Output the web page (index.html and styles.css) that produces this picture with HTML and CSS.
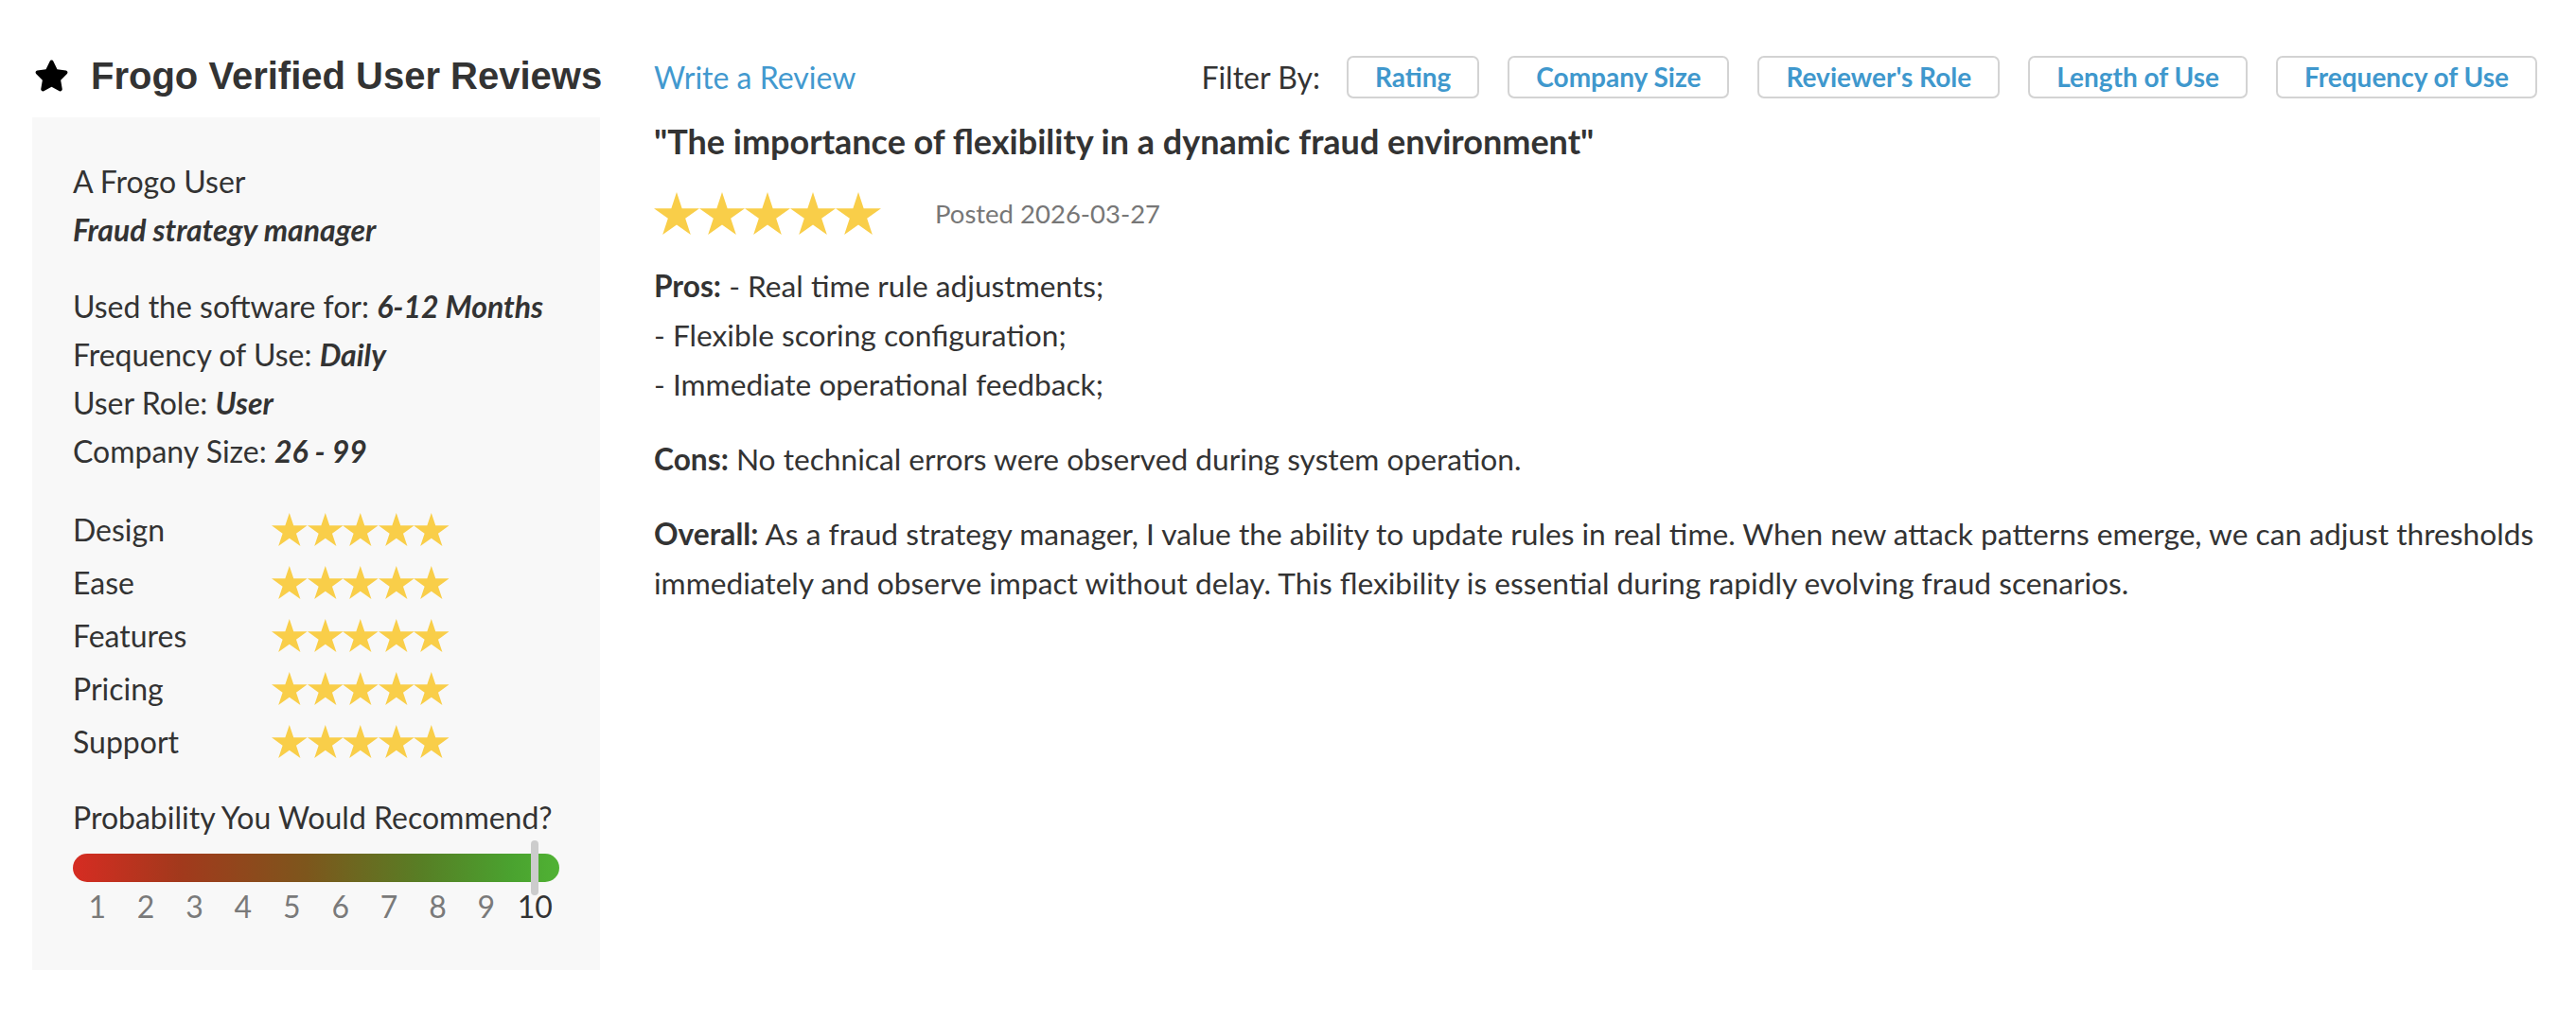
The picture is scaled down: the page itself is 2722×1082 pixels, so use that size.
FILE: index.html
```html
<!DOCTYPE html>
<html lang="en">
<head>
<meta charset="utf-8">
<title>Frogo Verified User Reviews</title>
<link rel="stylesheet" href="styles.css">
</head>
<body>
<svg class="defs" width="0" height="0" aria-hidden="true">
  <defs>
    <symbol id="star" viewBox="0 0 95.1 90.45" preserveAspectRatio="none">
      <polygon points="47.55,0 58.78,34.55 95.1,34.55 65.72,55.9 76.94,90.45 47.55,69.1 18.16,90.45 29.38,55.9 0,34.55 36.32,34.55"/>
    </symbol>
  </defs>
</svg>
<div class="page">
  <aside class="side">
    <div class="side-head">
      <svg class="head-star" viewBox="0 0 576 512"><path d="M316.9 18C311.6 7 300.4 0 288.1 0s-23.4 7-28.8 18L195 150.3 51.4 171.5c-12 1.8-22 10.2-25.7 21.7s-.7 24.2 7.9 32.7L137.8 329 113.2 474.7c-2 12 3 24.2 12.9 31.3s23 8 33.8 2.3l128.3-68.5 128.3 68.5c10.8 5.7 23.9 4.9 33.8-2.3s14.9-19.3 12.9-31.3L438.5 329 542.7 225.9c8.6-8.5 11.7-21.2 7.9-32.7s-13.7-19.9-25.7-21.7L381.2 150.3 316.9 18z"/></svg>
      <h2 class="side-title">Frogo Verified User Reviews</h2>
    </div>
    <div class="panel">
      <div class="who">
        <div>A Frogo User</div>
        <div class="em">Fraud strategy manager</div>
      </div>
      <div class="meta">
        <div>Used the software for: <span class="em">6-12 Months</span></div>
        <div>Frequency of Use: <span class="em">Daily</span></div>
        <div>User Role: <span class="em">User</span></div>
        <div>Company Size: <span class="em">26 - 99</span></div>
      </div>
      <div class="ratings">
        <div class="rating-row"><span class="rating-label">Design</span><span class="stars sm"><svg><use href="#star"/></svg><svg><use href="#star"/></svg><svg><use href="#star"/></svg><svg><use href="#star"/></svg><svg><use href="#star"/></svg></span></div>
        <div class="rating-row"><span class="rating-label">Ease</span><span class="stars sm"><svg><use href="#star"/></svg><svg><use href="#star"/></svg><svg><use href="#star"/></svg><svg><use href="#star"/></svg><svg><use href="#star"/></svg></span></div>
        <div class="rating-row"><span class="rating-label">Features</span><span class="stars sm"><svg><use href="#star"/></svg><svg><use href="#star"/></svg><svg><use href="#star"/></svg><svg><use href="#star"/></svg><svg><use href="#star"/></svg></span></div>
        <div class="rating-row"><span class="rating-label">Pricing</span><span class="stars sm"><svg><use href="#star"/></svg><svg><use href="#star"/></svg><svg><use href="#star"/></svg><svg><use href="#star"/></svg><svg><use href="#star"/></svg></span></div>
        <div class="rating-row"><span class="rating-label">Support</span><span class="stars sm"><svg><use href="#star"/></svg><svg><use href="#star"/></svg><svg><use href="#star"/></svg><svg><use href="#star"/></svg><svg><use href="#star"/></svg></span></div>
      </div>
      <div class="recommend">
        <div>Probability You Would Recommend?</div>
        <div class="bar"><span class="handle"></span></div>
        <div class="scale">
          <span>1</span><span>2</span><span>3</span><span>4</span><span>5</span><span>6</span><span>7</span><span>8</span><span>9</span><span class="on">10</span>
        </div>
      </div>
    </div>
  </aside>
  <main class="main">
    <div class="toolbar">
      <a class="write" href="#">Write a Review</a>
      <div class="filters">
        <span class="filter-label">Filter By:</span>
        <button class="filter-btn">Rating</button>
        <button class="filter-btn">Company Size</button>
        <button class="filter-btn">Reviewer's Role</button>
        <button class="filter-btn">Length of Use</button>
        <button class="filter-btn">Frequency of Use</button>
      </div>
    </div>
    <h1 class="review-title">"The importance of flexibility in a dynamic fraud environment"</h1>
    <div class="review-meta">
      <span class="stars lg"><svg><use href="#star"/></svg><svg><use href="#star"/></svg><svg><use href="#star"/></svg><svg><use href="#star"/></svg><svg><use href="#star"/></svg></span>
      <span class="posted">Posted 2026-03-27</span>
    </div>
    <div class="review-body">
      <p><b>Pros:</b> - Real time rule adjustments;<br>- Flexible scoring configuration;<br>- Immediate operational feedback;</p>
      <p><b>Cons:</b> No technical errors were observed during system operation.</p>
      <p><b>Overall:</b> As a fraud strategy manager, I value the ability to update rules in real time. When new attack patterns emerge, we can adjust thresholds immediately and observe impact without delay. This flexibility is essential during rapidly evolving fraud scenarios.</p>
    </div>
  </main>
</div>
</body>
</html>
```

FILE: styles.css
```css
html, body {
  margin: 0;
  padding: 0;
  background: #ffffff;
}

body {
  font-family: Lato, "Liberation Sans", Arial, sans-serif;
  color: #333333;
}

.defs {
  position: absolute;
  width: 0;
  height: 0;
  overflow: hidden;
}

.page {
  display: flex;
  gap: 57px;
  padding: 50px 41px 0 34px;
}

/* ---------- left column ---------- */
.side {
  width: 600px;
  flex: none;
}

.side-head {
  display: flex;
  align-items: center;
  height: 60px;
  gap: 23px;
  padding-left: 2px;
}

.head-star {
  width: 37px;
  height: 34px;
  fill: #000000;
  flex: none;
}

.side-title {
  margin: 0;
  font-family: "Liberation Sans", Arial, sans-serif;
  font-weight: bold;
  font-size: 40px;
  line-height: 60px;
  color: #333333;
  white-space: nowrap;
}

.panel {
  margin-top: 14px;
  background: #f8f8f8;
  padding: 42px 43px 42px 43px;
  font-size: 32px;
  line-height: 51px;
}

.em {
  font-weight: bold;
  font-style: italic;
}

.meta {
  margin-top: 30px;
}

.ratings {
  margin-top: 29px;
}

.rating-row {
  display: flex;
  align-items: center;
  height: 56px;
}

.rating-label {
  width: 210px;
  flex: none;
}

.stars {
  display: inline-flex;
  fill: #f9ce49;
}

.stars.sm svg {
  width: 37.6px;
  height: 35px;
}

.stars.lg svg {
  width: 48px;
  height: 45px;
}

.recommend {
  margin-top: 27px;
}

.bar {
  position: relative;
  margin-top: 13px;
  height: 30px;
  border-radius: 15px;
  background: linear-gradient(to right, #d62c22 0%, #a2391c 22%, #7d561c 48%, #577f25 72%, #4aa22f 90%, #50b234 100%);
}

.handle {
  position: absolute;
  left: calc(95% - 4px);
  top: -14px;
  bottom: -14px;
  width: 8px;
  border-radius: 4px;
  background: #cccccc;
}

.scale {
  display: grid;
  grid-template-columns: repeat(10, 1fr);
  text-align: center;
  color: #7a7a7a;
}

.scale .on {
  color: #333333;
}

/* ---------- right column ---------- */
.main {
  flex: 1;
  min-width: 0;
}

.toolbar {
  display: flex;
  align-items: center;
  justify-content: space-between;
  height: 62px;
}

.write {
  font-size: 32px;
  color: #4299cf;
  text-decoration: none;
}

.filters {
  display: flex;
  align-items: center;
  gap: 30px;
}

.filter-label {
  font-size: 32px;
  color: #333333;
  margin-right: -2px;
}

.filter-btn {
  font-family: Lato, "Liberation Sans", Arial, sans-serif;
  font-weight: bold;
  font-size: 28px;
  color: #3f98cd;
  background: #ffffff;
  border: 2px solid #d3d3d3;
  border-radius: 7px;
  height: 45px;
  padding: 0 28px;
  line-height: 41px;
}

.review-title {
  margin: 12px 0 0 0;
  font-size: 36px;
  line-height: 51px;
  font-weight: bold;
  color: #333333;
}

.review-meta {
  display: flex;
  align-items: center;
  margin-top: 28px;
  height: 45px;
}

.posted {
  margin-left: 57px;
  font-size: 27.5px;
  color: #777777;
}

.review-body {
  margin-top: 28px;
  font-size: 31.7px;
  line-height: 52px;
}

.review-body p {
  margin: 0 0 27px 0;
}

.review-body b {
  font-weight: bold;
}
```
